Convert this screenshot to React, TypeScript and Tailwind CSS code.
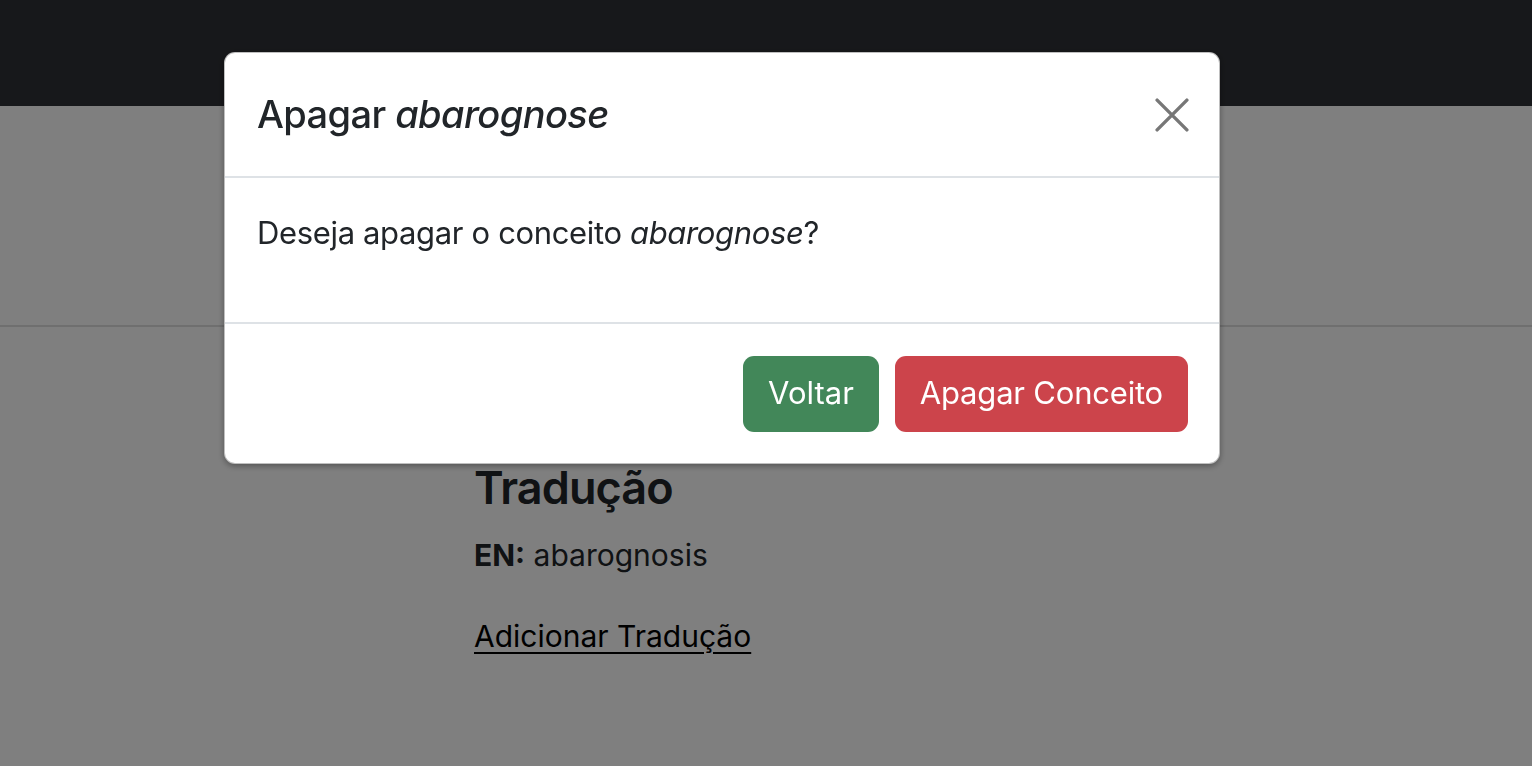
import React from 'react';

const font = { fontFamily: 'Inter, "Liberation Sans", sans-serif' };

// Page behind the modal
const Page: React.FC = () => (
    <div className="min-h-screen bg-white text-[#212529]" style={font}>
        <nav className="h-[106px] bg-[#2f3136]" />
        <div className="h-[219px]" />
        <hr className="border-0 border-t-2 border-[#dedede]" />
        <div className="ml-[474px] pt-[134px]">
            <h2 className="text-[45px] font-semibold leading-[1.2] tracking-[-0.9px] mb-[18px]">Tradução</h2>
            <p className="text-[30px] leading-[1.5] mb-[36px]">
                <strong className="font-bold">EN:</strong> abarognosis
            </p>
            <a href="#" className="text-[30px] leading-[1.5] text-black underline underline-offset-[5px] decoration-2">
                Adicionar Tradução
            </a>
        </div>
    </div>
);

const CloseIcon: React.FC = () => (
    <svg viewBox="0 0 32 32" className="w-[34px] h-[34px]" fill="none" stroke="currentColor" strokeWidth="3.2" strokeLinecap="round">
        <path d="M2 2L30 30M30 2L2 30" />
    </svg>
);

const DeleteModal: React.FC = () => (
    <div className="fixed inset-0 flex items-start pl-[224px] pt-[52px]" style={font}>
        <div className="w-[996px] bg-white rounded-[11px] border border-black/25 shadow-[0_2px_6px_rgba(0,0,0,0.35)] text-[#212529]">
            {/* Header */}
            <div className="flex items-center justify-between pl-[32px] pr-[30px] h-[125px] border-b-2 border-[#dee2e6]">
                <h5 className="text-[38px] font-medium leading-[1.5] tracking-[-0.6px]">
                    Apagar <em>abarognose</em>
                </h5>
                <button className="text-[#777]">
                    <CloseIcon />
                </button>
            </div>
            {/* Body */}
            <div className="px-[32px] pt-[32px] h-[144px]">
                <p className="text-[31px] leading-[1.5] tracking-[-0.35px]">
                    Deseja apagar o conceito <em>abarognose</em>?
                </p>
            </div>
            {/* Footer */}
            <div className="flex justify-end items-center gap-[16px] pl-[32px] pr-[31px] h-[141px] border-t-2 border-[#dee2e6]">
                <button className="h-[76px] px-[25px] rounded-[11px] bg-[#428759] text-white text-[31px]">
                    Voltar
                </button>
                <button className="h-[76px] px-[25px] rounded-[11px] bg-[#cc444b] text-white text-[31px] tracking-[-0.2px]">
                    Apagar Conceito
                </button>
            </div>
        </div>
    </div>
);

const App: React.FC = () => (
    <div className="relative">
        <Page />
        {/* backdrop */}
        <div className="fixed inset-0 bg-black/50" />
        <DeleteModal />
    </div>
);

export default App;
